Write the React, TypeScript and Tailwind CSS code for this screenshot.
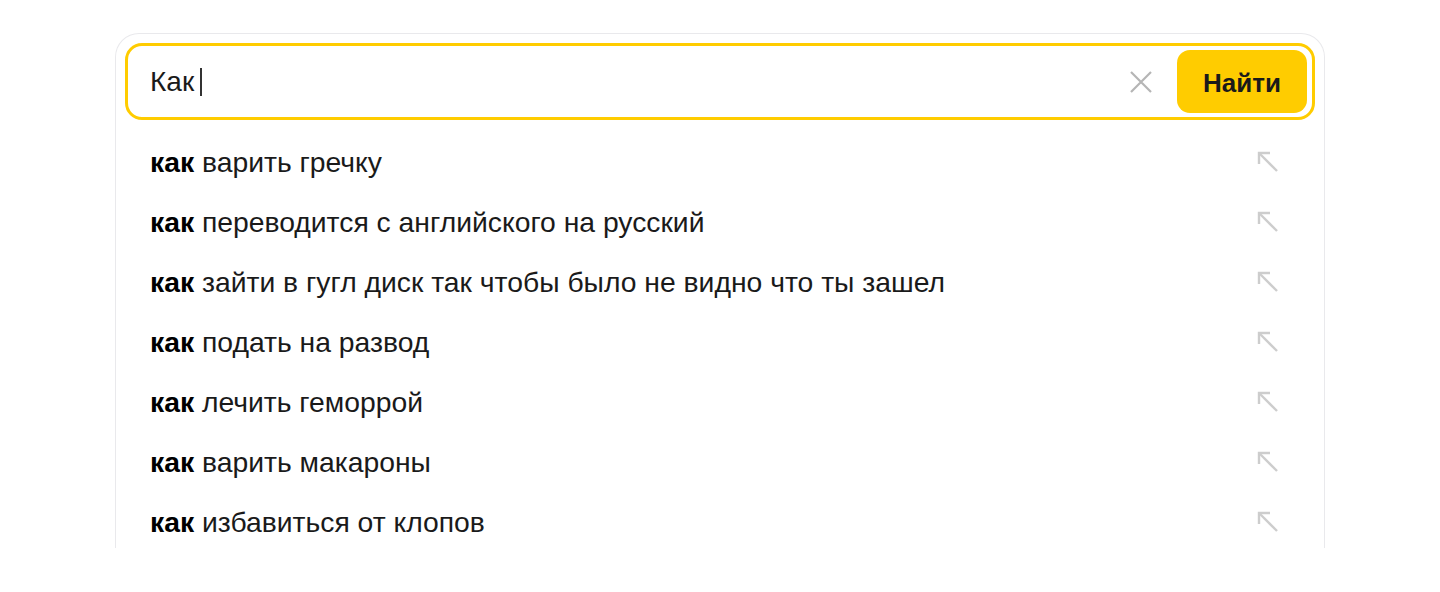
import React from "react";

const suggestions = [
  "варить гречку",
  "переводится с английского на русский",
  "зайти в гугл диск так чтобы было не видно что ты зашел",
  "подать на развод",
  "лечить геморрой",
  "варить макароны",
  "избавиться от клопов",
];

function ClearIcon() {
  return (
    <svg width="24" height="24" viewBox="0 0 24 24" fill="none">
      <path d="M2 2L22 22M22 2L2 22" stroke="#b5b5b5" strokeWidth="2.2" />
    </svg>
  );
}

function FillArrow() {
  return (
    <svg width="22" height="22" viewBox="0 0 22 22" fill="none">
      <path d="M2 13V2H13" stroke="#cdcdcd" strokeWidth="2.4" />
      <path d="M2 2L20 20" stroke="#cdcdcd" strokeWidth="2.4" />
    </svg>
  );
}

export default function App() {
  return (
    <div className="h-[592px] w-[1440px] bg-white pt-[33px] font-['Liberation_Sans',Arial,sans-serif]">
      <div className="ml-[115px] h-[515px] w-[1210px] rounded-t-[24px] border-x border-t border-[#e9e9ec] px-[9px] pt-[9px]">
        <div className="flex h-[77px] items-center rounded-[17px] border-[3px] border-[#ffcc00] pl-[22px] pr-[5px]">
          <div className="flex flex-1 items-center text-[28px] text-[#1a1a1a]">
            Как
            <span className="ml-[6px] inline-block h-[28px] w-[2px] bg-[#333]" />
          </div>
          <button className="mr-[24px] flex items-center">
            <ClearIcon />
          </button>
          <button className="flex h-[63px] w-[130px] items-center justify-center rounded-[13px] bg-[#ffcc00] pt-[4px] text-[26px] font-bold text-[#1a1a1a]">
            Найти
          </button>
        </div>
        <ul className="mt-[12px]">
          {suggestions.map((s) => (
            <li key={s} className="flex h-[60px] items-center justify-between pl-[25px] pr-[36px] text-[28.3px] text-[#1a1a1a]">
              <span>
                <b className="font-bold text-black">как</b> {s}
              </span>
              <FillArrow />
            </li>
          ))}
        </ul>
      </div>
    </div>
  );
}
